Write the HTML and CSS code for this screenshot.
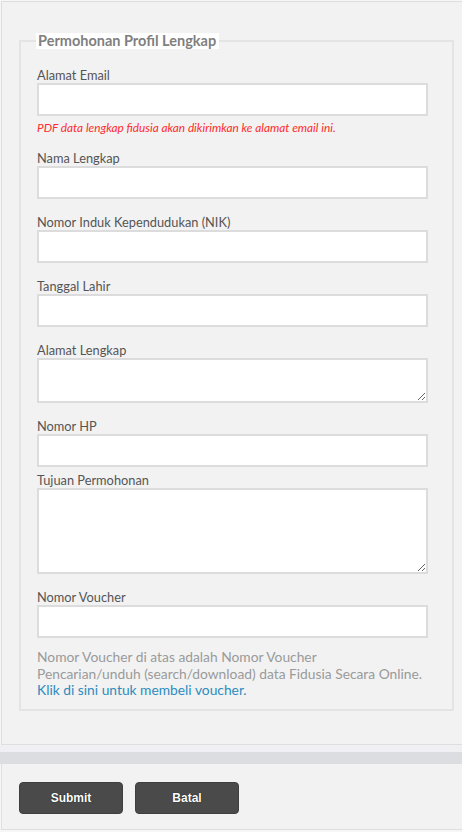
FILE: index.html
```html
<!DOCTYPE html>
<html lang="id">
<head>
<meta charset="utf-8">
<title>Permohonan Profil Lengkap</title>
<link rel="stylesheet" href="styles.css">
</head>
<body>
<div class="panel">
  <fieldset class="box">
    <legend class="box-title">Permohonan Profil Lengkap</legend>
    <div class="field field-email">
      <label class="lbl" for="email">Alamat Email</label>
      <input class="inp" id="email" type="text">
      <p class="hint">PDF data lengkap fidusia akan dikirimkan ke alamat email ini.</p>
    </div>
    <div class="field">
      <label class="lbl" for="nama">Nama Lengkap</label>
      <input class="inp" id="nama" type="text">
    </div>
    <div class="field">
      <label class="lbl" for="nik">Nomor Induk Kependudukan (NIK)</label>
      <input class="inp" id="nik" type="text">
    </div>
    <div class="field">
      <label class="lbl" for="tgl">Tanggal Lahir</label>
      <input class="inp" id="tgl" type="text">
    </div>
    <div class="field">
      <label class="lbl" for="alamat">Alamat Lengkap</label>
      <textarea class="inp area-sm" id="alamat"></textarea>
    </div>
    <div class="field">
      <label class="lbl" for="hp">Nomor HP</label>
      <input class="inp" id="hp" type="text">
    </div>
    <div class="field field-tight">
      <label class="lbl" for="tujuan">Tujuan Permohonan</label>
      <textarea class="inp area-lg" id="tujuan"></textarea>
    </div>
    <div class="field">
      <label class="lbl" for="voucher">Nomor Voucher</label>
      <input class="inp" id="voucher" type="text">
    </div>
    <p class="note">Nomor Voucher di atas adalah Nomor Voucher<br>Pencarian/unduh (search/download) data Fidusia Secara Online. <a class="note-link" href="#">Klik di sini untuk membeli voucher.</a></p>
  </fieldset>
</div>
<div class="divider"></div>
<div class="footer">
  <button class="btn" type="button">Submit</button>
  <button class="btn" type="button">Batal</button>
</div>
</body>
</html>
```

FILE: styles.css
```css
html, body {
  margin: 0;
  padding: 0;
  background: #f6f6f6;
}
body {
  font-family: Lato, "Noto Sans", sans-serif;
  color: #555;
  width: 462px;
  height: 832px;
  overflow: hidden;
}
.panel {
  margin: 1px 0 0 1px;
  border: 1px solid #dedede;
  border-right: none;
  background: #f2f2f2;
  padding: 31px 16px 0 17px;
  height: 744px;
  box-sizing: border-box;
}
.box {
  margin: 0;
  border: 2px solid #e4e4e4;
  padding: 17px 15px 10px 16px;
  width: 426px;
  box-sizing: border-box;
}
.box-title {
  background: #fff;
  color: #7f7f7f;
  font-weight: bold;
  font-size: 14.5px;
  line-height: 16px;
  padding: 0 3px 0 2px;
  margin-left: -1px;
}
.field {
  margin-top: 14px;
}
.field-email {
  margin-top: 0;
}
.field-tight {
  margin-top: 4px;
}
.lbl {
  display: block;
  font-size: 12.8px;
  line-height: 19px;
  color: #555;
  height: 17px;
}
.inp {
  display: block;
  width: 391px;
  height: 33px;
  box-sizing: border-box;
  margin: 0;
  border: 2px solid #dcdcdc;
  background: #fff;
  font: inherit;
  outline: none;
}
.area-sm {
  height: 45px;
  resize: vertical;
}
.area-lg {
  height: 86px;
  resize: vertical;
}
.hint {
  margin: 5px 0 0 0;
  font-size: 11.8px;
  line-height: 14px;
  font-style: italic;
  color: #ff2b2b;
}
.note {
  margin: 11px 0 0 0;
  font-size: 13.8px;
  line-height: 16.6px;
  color: #9a9a9a;
  width: 400px;
}
.note-link {
  color: #2b8cc0;
  text-decoration: none;
}
.divider {
  height: 7px;
  background: #f0f0f4;
  border-bottom: 12px solid #dcdde0;
}
.footer {
  margin-left: 1px;
  border-left: 1px solid #e0e0e0;
  border-bottom: 1px solid #dedede;
  background: #f2f2f2;
  height: 66px;
  box-sizing: border-box;
  padding: 18px 0 0 17px;
  display: flex;
  gap: 12px;
  align-items: flex-start;
}
.btn {
  width: 104px;
  height: 32px;
  background: #4a4a4a;
  border: 1px solid #3f3f3f;
  border-radius: 4px;
  color: #fff;
  font-family: "Liberation Sans", Arial, sans-serif;
  font-weight: bold;
  font-size: 12px;
  text-shadow: 0 0 1px #000;
  padding: 0;
}
```
